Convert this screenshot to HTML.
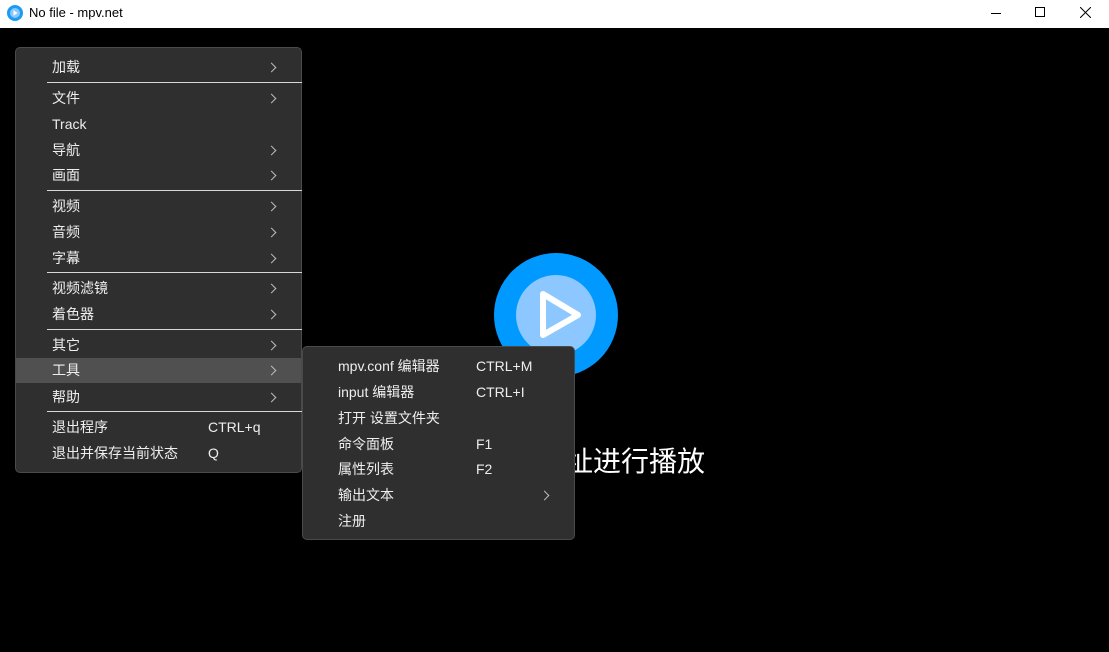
<!DOCTYPE html>
<html><head><meta charset="utf-8"><style>
*{margin:0;padding:0;box-sizing:border-box}
body{width:1109px;height:652px;background:#000;position:relative;overflow:hidden;font-family:"Liberation Sans","Noto Sans CJK SC",sans-serif}
.title{position:absolute;left:0;top:0;width:1109px;height:28px;background:#fff;color:#000;font-size:13px}
.t{position:absolute;color:#eee;font-size:14px;white-space:nowrap;line-height:18px}
.menu{position:absolute;background:#2f2f2f;border:1px solid #4a4a4a;border-radius:5px}
.sep{position:absolute;height:1px;background:#d8d8d8}
.ar{position:absolute;width:7px;height:7px;border-right:1px solid #bbb;border-top:1px solid #bbb;transform:rotate(45deg)}
</style></head><body>
<div class="title">
<svg style="position:absolute;left:7px;top:5px" width="16" height="16"><circle cx="8" cy="8" r="8" fill="#1a9cf5"/><circle cx="8" cy="8" r="5" fill="#8cc8ff"/><path d="M6.5 5.2v5.6l4-2.8z" fill="#fff"/></svg>
<span style="position:absolute;left:29px;top:5px;font-size:13px">No file - mpv.net</span>
<div style="position:absolute;left:991px;top:13px;width:10px;height:1px;background:#000"></div>
<div style="position:absolute;left:1035px;top:7px;width:10px;height:10px;border:1px solid #000"></div>
<svg style="position:absolute;left:1080px;top:7px" width="11" height="11"><path d="M0 0L11 11M11 0L0 11" stroke="#000" stroke-width="1"/></svg>
</div>

<svg style="position:absolute;left:490px;top:250px" width="132" height="132"><circle cx="66" cy="65" r="62" fill="#0099ff"/><circle cx="66" cy="65" r="40" fill="#8cc8ff"/><path d="M53 44V85L88 65Z" fill="none" stroke="#fff" stroke-width="6" stroke-linejoin="round"/></svg>
<div class="t" style="left:481px;top:445px;font-size:28px;line-height:34px;color:#fff">拖放网址进行播放</div>

<div class="menu" style="left:15px;top:47px;width:287px;height:426px">
<div style="position:absolute;left:0;top:310px;width:285px;height:25px;background:#505050"></div>
<div class="sep" style="left:31px;top:34px;width:255px"></div>
<div class="sep" style="left:31px;top:142px;width:255px"></div>
<div class="sep" style="left:31px;top:224px;width:255px"></div>
<div class="sep" style="left:31px;top:281px;width:255px"></div>
<div class="sep" style="left:31px;top:363px;width:255px"></div>
</div>
<div class="t" style="left:52px;top:58px">加载</div><div class="ar" style="left:268px;top:64px"></div>
<div class="t" style="left:52px;top:89px">文件</div><div class="ar" style="left:268px;top:95px"></div>
<div class="t" style="left:52px;top:115px">Track</div>
<div class="t" style="left:52px;top:141px">导航</div><div class="ar" style="left:268px;top:147px"></div>
<div class="t" style="left:52px;top:166px">画面</div><div class="ar" style="left:268px;top:172px"></div>
<div class="t" style="left:52px;top:197px">视频</div><div class="ar" style="left:268px;top:203px"></div>
<div class="t" style="left:52px;top:223px">音频</div><div class="ar" style="left:268px;top:229px"></div>
<div class="t" style="left:52px;top:249px">字幕</div><div class="ar" style="left:268px;top:255px"></div>
<div class="t" style="left:52px;top:279px">视频滤镜</div><div class="ar" style="left:268px;top:285px"></div>
<div class="t" style="left:52px;top:305px">着色器</div><div class="ar" style="left:268px;top:311px"></div>
<div class="t" style="left:52px;top:336px">其它</div><div class="ar" style="left:268px;top:342px"></div>
<div class="t" style="left:52px;top:361px">工具</div><div class="ar" style="left:268px;top:367px"></div>
<div class="t" style="left:52px;top:388px">帮助</div><div class="ar" style="left:268px;top:394px"></div>
<div class="t" style="left:52px;top:418px">退出程序</div><div class="t" style="left:208px;top:418px">CTRL+q</div>
<div class="t" style="left:52px;top:444px">退出并保存当前状态</div><div class="t" style="left:208px;top:444px">Q</div>

<div class="menu" style="left:302px;top:346px;width:273px;height:194px"></div>
<div class="t" style="left:338px;top:357px">mpv.conf 编辑器</div><div class="t" style="left:476px;top:357px">CTRL+M</div>
<div class="t" style="left:338px;top:383px">input 编辑器</div><div class="t" style="left:476px;top:383px">CTRL+I</div>
<div class="t" style="left:338px;top:409px">打开 设置文件夹</div>
<div class="t" style="left:338px;top:435px">命令面板</div><div class="t" style="left:476px;top:435px">F1</div>
<div class="t" style="left:338px;top:460px">属性列表</div><div class="t" style="left:476px;top:460px">F2</div>
<div class="t" style="left:338px;top:486px">输出文本</div><div class="ar" style="left:541px;top:492px"></div>
<div class="t" style="left:338px;top:512px">注册</div>
</body></html>
